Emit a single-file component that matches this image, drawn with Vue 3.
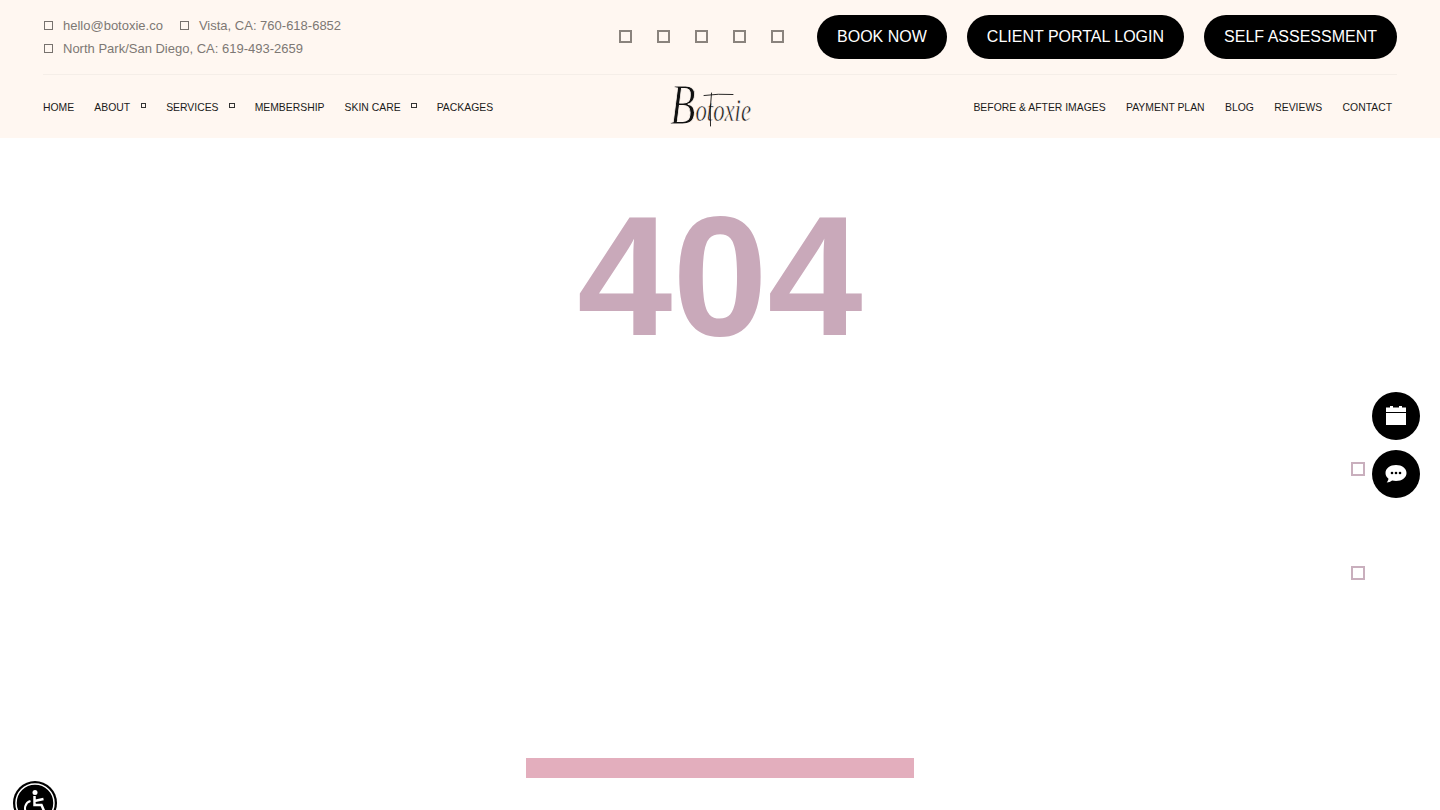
<script setup>
const leftNav = [
  { label: 'HOME' },
  { label: 'ABOUT', sub: true },
  { label: 'SERVICES', sub: true },
  { label: 'MEMBERSHIP' },
  { label: 'SKIN CARE', sub: true },
  { label: 'PACKAGES' }
]
const rightNav = ['BEFORE & AFTER IMAGES', 'PAYMENT PLAN', 'BLOG', 'REVIEWS', 'CONTACT']
const buttons = ['BOOK NOW', 'CLIENT PORTAL LOGIN', 'SELF ASSESSMENT']
</script>

<template>
  <div class="page">
    <header class="header">
      <div class="top">
        <div class="contact">
          <div class="contact-row">
            <span class="item"><i class="box"></i>hello@botoxie.co</span>
            <span class="item"><i class="box"></i>Vista, CA: 760-618-6852</span>
          </div>
          <div class="contact-row">
            <span class="item"><i class="box"></i>North Park/San Diego, CA: 619-493-2659</span>
          </div>
        </div>
        <div class="top-right">
          <div class="social">
            <i v-for="n in 5" :key="n" class="social-box"></i>
          </div>
          <div class="buttons">
            <a v-for="b in buttons" :key="b" class="btn">{{ b }}</a>
          </div>
        </div>
      </div>
      <nav class="nav">
        <ul class="menu left">
          <li v-for="item in leftNav" :key="item.label">
            {{ item.label }}<i v-if="item.sub" class="caret"></i>
          </li>
        </ul>
        <svg class="logo" width="84" height="48" viewBox="0 0 84 48" role="img" aria-label="Botoxie">
          <text x="0" y="41" class="logo-text" textLength="81" lengthAdjust="spacingAndGlyphs"><tspan class="logo-b">B</tspan><tspan class="logo-rest" dy="-3">otoxie</tspan></text>
          <path d="M41.500 10 Q39.500 26 40.500 43 M34 12.500 Q48 10.500 63 11.500" fill="none" stroke="#111" stroke-width=".9" stroke-linecap="round" />
        </svg>
        <ul class="menu right">
          <li v-for="item in rightNav" :key="item">{{ item }}</li>
        </ul>
      </nav>
    </header>

    <main class="main">
      <h1 class="code">404</h1>
      <div class="bar"></div>
    </main>

    <i class="float-box first"></i>
    <i class="float-box second"></i>

    <div class="fab calendar">
      <svg width="20" height="20" viewBox="0 1 20 20">
        <rect x="4" y="0" width="3" height="4" fill="#fff" />
        <rect x="13" y="0" width="3" height="4" fill="#fff" />
        <path d="M0 2.500h20v4.500H0zM0 8h20v12H0z" fill="#fff" />
      </svg>
    </div>
    <div class="fab chat">
      <svg width="22" height="20" viewBox="0 0 22 20">
        <path d="M11 1C5 1 .5 4.500.5 9c0 2.300 1.200 4.300 3 5.700-.2 1.500-1 2.800-1.800 3.800 2 0 4-.8 5.400-2 1.200.3 2.500.5 3.900.5 6 0 10.500-3.500 10.500-8S17 1 11 1z" fill="#fff" />
        <circle cx="7" cy="9" r="1.300" fill="#000" />
        <circle cx="11" cy="9" r="1.300" fill="#000" />
        <circle cx="15" cy="9" r="1.300" fill="#000" />
      </svg>
    </div>

    <div class="a11y">
      <svg width="44" height="44" viewBox="0 0 44 44">
        <circle cx="22" cy="22" r="22" fill="#000" />
        <circle cx="22" cy="22" r="19" fill="none" stroke="#fff" stroke-width="1.500" />
        <circle cx="22" cy="11.500" r="2.500" fill="#fff" />
        <path d="M21.500 15v9h7l3 7M21.500 20l9-2" fill="none" stroke="#fff" stroke-width="2.500" />
        <path d="M17.500 20a7.500 7.500 0 1 0 9 10" fill="none" stroke="#fff" stroke-width="2" />
      </svg>
    </div>
  </div>
</template>

<style>
html, body {
  margin: 0;
  background: #fff;
  overflow: hidden;
}
</style>

<style scoped>
.page {
  position: relative;
  height: 810px;
  overflow: hidden;
  font-family: "Liberation Sans", Arial, sans-serif;
  background: #fff;
}
.header {
  background: #fff7f1;
  padding: 0 43px;
  height: 138px;
  box-sizing: border-box;
}
.top {
  height: 75px;
  box-sizing: border-box;
  border-bottom: 1px solid #f5eee8;
  display: flex;
  justify-content: space-between;
  align-items: flex-start;
}
.contact {
  padding-top: 14px;
  font-size: 13px;
  line-height: 23px;
  color: #7d7874;
}
.contact-row {
  display: flex;
  gap: 16px;
}
.item {
  display: flex;
  align-items: center;
}
.box {
  display: block;
  width: 7px;
  height: 7px;
  border: 1px solid #77726e;
  margin: 0 10px 0 1px;
}
.top-right {
  display: flex;
  align-items: center;
  padding-top: 15px;
}
.social {
  display: flex;
  gap: 25px;
  margin-right: 33px;
  margin-top: -1px;
}
.social-box {
  display: block;
  width: 9px;
  height: 9px;
  border: 2px solid #8a837d;
}
.buttons {
  display: flex;
  gap: 20px;
}
.btn {
  height: 44px;
  line-height: 43px;
  padding: 0 20px;
  border-radius: 22px;
  background: #000;
  color: #fff;
  font-size: 16px;
  white-space: nowrap;
}
.nav {
  height: 63px;
  display: flex;
  justify-content: space-between;
  align-items: center;
  position: relative;
}
.menu {
  list-style: none;
  margin: 0;
  padding: 1px 0 0;
  display: flex;
  gap: 20.400px;
  font-size: 10.400px;
  color: #1a1a1a;
  white-space: nowrap;
}
.menu.left {
  gap: 20.100px;
}
.menu.right {
  padding-right: 5px;
}
.menu li {
  display: flex;
  align-items: center;
}
.caret {
  display: block;
  width: 3.500px;
  height: 3.500px;
  border: 1px solid #333;
  margin: -3px 0 0 10.500px;
}
.logo {
  position: absolute;
  left: 627px;
  top: 8px;
  overflow: visible;
}
.logo-text {
  font-family: "Liberation Serif", serif;
  font-style: italic;
  fill: #111;
  stroke: #fff7f1;
}
.logo-b {
  font-size: 57px;
  stroke-width: 1px;
}
.logo-rest {
  font-size: 31px;
  stroke-width: .6px;
}
.main {
  display: flex;
  flex-direction: column;
  align-items: center;
}
.code {
  margin: 0;
  height: 620px;
  padding-top: 40px;
  box-sizing: border-box;
  font-size: 171px;
  line-height: 196px;
  font-weight: 700;
  color: #c9a9ba;
}
.bar {
  width: 388px;
  height: 20px;
  background: #e3aebd;
}
.fab {
  position: absolute;
  left: 1372px;
  width: 48px;
  height: 48px;
  border-radius: 50%;
  background: #000;
  display: flex;
  align-items: center;
  justify-content: center;
}
.calendar { top: 392px; }
.chat { top: 450px; }
.float-box {
  position: absolute;
  left: 1351px;
  width: 10px;
  height: 10px;
  border: 2px solid #c9afbd;
}
.first { top: 462px; }
.second { top: 566px; }
.a11y {
  position: absolute;
  left: 13px;
  top: 781px;
  width: 44px;
  height: 44px;
}
</style>
